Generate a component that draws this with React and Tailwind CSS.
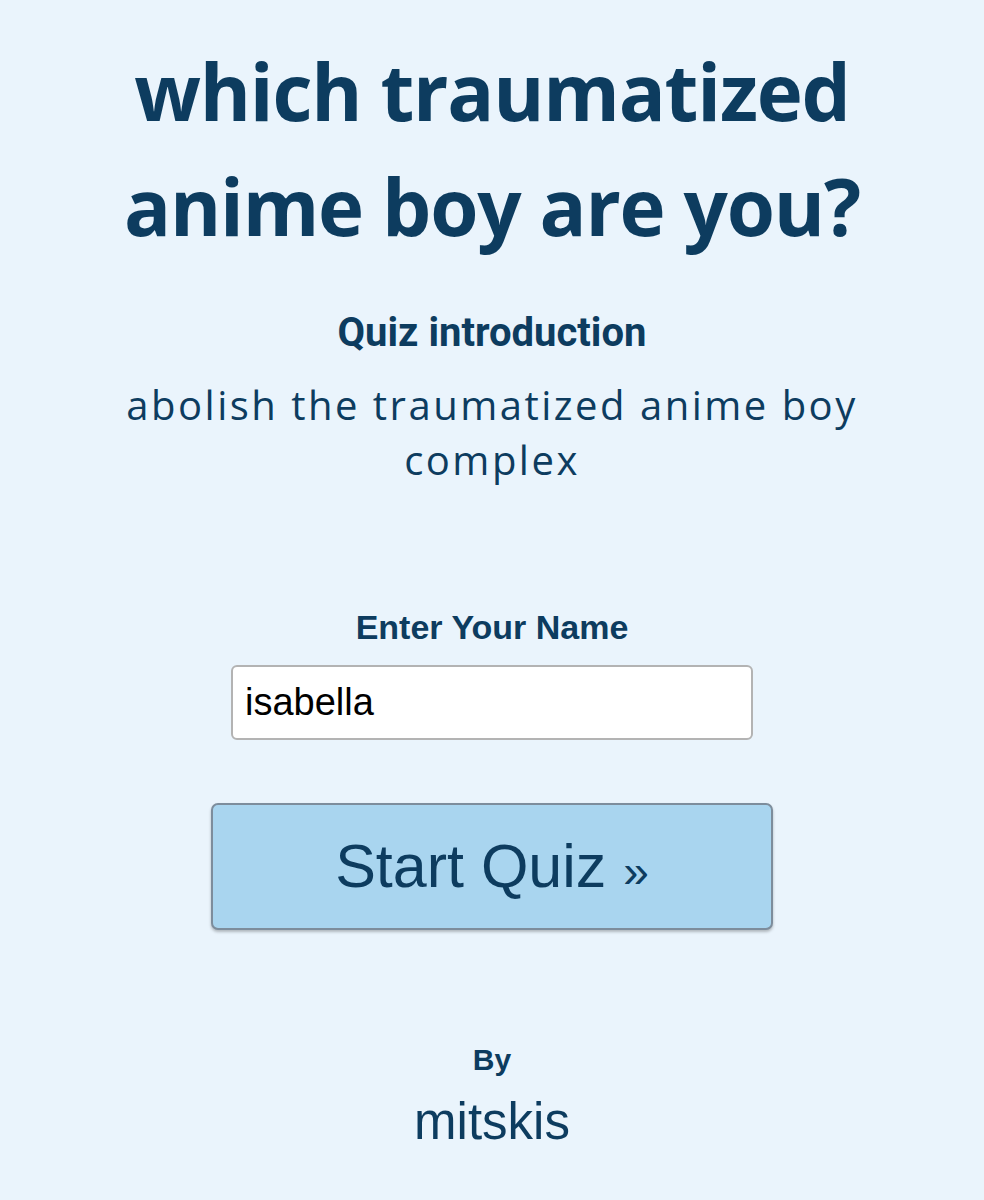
export default function App() {
  return (
    <div className="min-h-[1200px] w-full bg-[#eaf4fc] flex flex-col items-center text-[#0d3c5f]">
      <h1 className="mt-[34px] text-center font-['Open_Sans',sans-serif] font-bold text-[78px] leading-[115px] tracking-[-1.2px] whitespace-nowrap">
        which traumatized
        <br />
        anime boy are you?
      </h1>
      <div className="mt-[45px] font-['Roboto',sans-serif] text-[40px] font-bold leading-[48px]">
        Quiz introduction
      </div>
      <p className="mt-[20px] text-center font-['Open_Sans',sans-serif] font-normal text-[40px] leading-[55px] tracking-[2.5px] whitespace-nowrap">
        abolish the traumatized anime boy
        <br />
        complex
      </p>
      <div className="mt-[120px] font-['Liberation_Sans',Arial,sans-serif] text-[34px] font-bold leading-[40px]">
        Enter Your Name
      </div>
      <input
        defaultValue="isabella"
        className="mt-[18px] w-[522px] h-[75px] bg-white border-2 border-[#b3b3b3] rounded-[6px] px-[12px] font-['Liberation_Sans',Arial,sans-serif] text-[38px] text-black outline-none"
      />
      <button className="mt-[63px] w-[562px] h-[127px] bg-[#a9d5ef] border-2 border-[#7d8d9c] rounded-[7px] shadow-[0_2px_3px_rgba(0,0,0,0.25)] font-['Liberation_Sans',Arial,sans-serif] text-[61px] text-[#0d3c5f]">
        Start Quiz <span className="text-[46px]">»</span>
      </button>
      <div className="mt-[112px] font-['Liberation_Sans',Arial,sans-serif] text-[30px] font-bold leading-[36px]">
        By
      </div>
      <div className="mt-[14px] font-['Liberation_Sans',Arial,sans-serif] text-[51px] leading-[60px]">
        mitskis
      </div>
    </div>
  );
}
